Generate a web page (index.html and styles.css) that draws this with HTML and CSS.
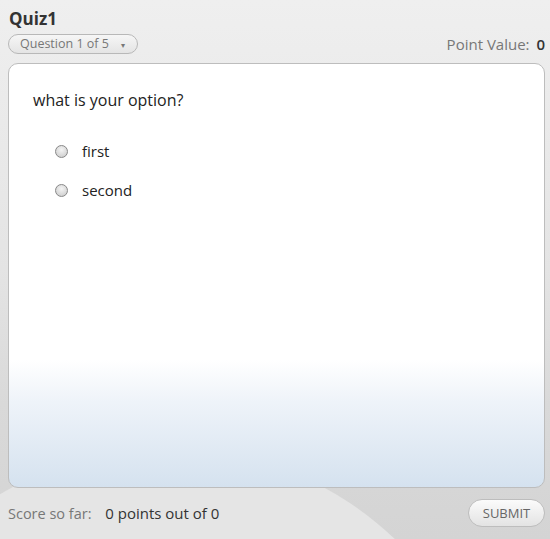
FILE: index.html
```html
<!DOCTYPE html>
<html lang="en">
<head>
    <meta charset="UTF-8">
    <title>Quiz1</title>
    <link rel="stylesheet" href="styles.css">
</head>
<body>
    <div class="quiz">
        <!-- header -->
        <div class="quiz-header">
            <h1>Quiz1</h1>
            <div class="header-row">
                <button class="question-select">Question 1 of 5 <span class="arrow">&#9662;</span></button>
                <div class="point-value">Point Value: <b>0</b></div>
            </div>
        </div>

        <!-- question card -->
        <div class="card">
            <p class="question">what is your option?</p>
            <label class="option"><span class="radio"></span>first</label>
            <label class="option"><span class="radio"></span>second</label>
        </div>

        <!-- footer -->
        <div class="quiz-footer">
            <div class="score">Score so far: <b>0 points out of 0</b></div>
            <button class="submit">SUBMIT</button>
        </div>
    </div>
</body>
</html>
```

FILE: styles.css
```css
html, body {
    margin: 0;
    padding: 0;
}
body {
    font-family: "Open Sans", Arial, sans-serif;
    width: 550px;
    height: 539px;
    overflow: hidden;
    background: linear-gradient(#efefef 0%, #e4e4e4 50%, #d9d9d9 75%, #d4d4d4 100%);
}
.quiz {
    position: relative;
    height: 539px;
    display: flex;
    flex-direction: column;
    overflow: hidden;
}
/* lighter swoosh behind the footer */
.quiz::before {
    content: "";
    position: absolute;
    left: -160px;
    top: 448px;
    width: 656px;
    height: 656px;
    border-radius: 50%;
    background: #e5e5e5;
}
.quiz-header {
    padding: 5px 5px 0 8px;
}
h1 {
    margin: 0 0 0 1px;
    font-size: 17px;
    font-weight: bold;
    color: #333;
    line-height: 28px;
}
.header-row {
    display: flex;
    justify-content: space-between;
    align-items: center;
    height: 21px;
}
.question-select {
    font-family: inherit;
    height: 20px;
    width: 130px;
    padding: 0 0 0 11px;
    text-align: left;
    font-size: 12.5px;
    color: #777;
    border: 1px solid #b8b8b8;
    border-radius: 10px;
    background: linear-gradient(#f6f6f6, #e4e4e4);
}
.arrow {
    font-size: 8px;
    margin-left: 9px;
    color: #777;
}
.point-value {
    font-size: 15px;
    color: #777;
}
.point-value b {
    color: #333;
    font-weight: 600;
    margin-left: 3px;
}
.card {
    position: relative;
    margin: 9px 5px 0 8px;
    height: 425px;
    border: 1px solid #bdbdbd;
    border-radius: 10px;
    background: linear-gradient(#ffffff 0%, #ffffff 70%, #eef3f9 80%, #d5e2ef 100%);
    box-sizing: border-box;
    padding: 25px 24px;
}
.question {
    margin: 0 0 29px 0;
    font-size: 16px;
    line-height: 22px;
    color: #222;
}
.option {
    display: flex;
    align-items: center;
    gap: 14px;
    margin: 0 0 17px 22px;
    font-size: 15px;
    color: #222;
    height: 22px;
}
.radio {
    width: 11px;
    height: 11px;
    border-radius: 50%;
    border: 1px solid #888;
    background: radial-gradient(circle at 50% 35%, #f4f4f4, #c8c8c8);
}
.quiz-footer {
    position: relative;
    display: flex;
    justify-content: space-between;
    align-items: center;
    padding: 11px 5px 0 8px;
}
.score {
    font-size: 14.5px;
    color: #777;
}
.score b {
    color: #333;
    font-size: 15px;
    font-weight: normal;
    margin-left: 10px;
}
.submit {
    font-family: inherit;
    width: 77px;
    height: 28px;
    font-size: 13px;
    color: #666;
    border: 1px solid #bdbdbd;
    border-radius: 14px;
    background: linear-gradient(#fbfbfb, #e3e3e3);
}
```
